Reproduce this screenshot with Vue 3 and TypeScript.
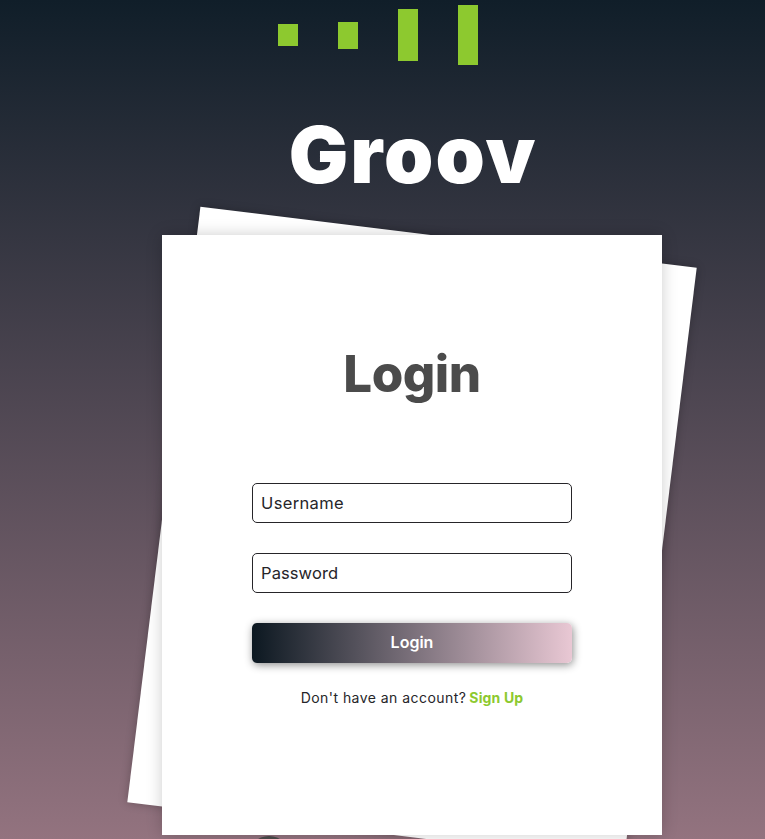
<script setup lang="ts">
import { ref } from 'vue'

interface Bar {
  id: number
  height: number
}

const bars: Bar[] = [
  { id: 1, height: 21.5 },
  { id: 2, height: 27 },
  { id: 3, height: 51.7 },
  { id: 4, height: 59.7 },
]

const username = ref('')
const password = ref('')
</script>

<template>
  <main class="page">
    <div class="equalizer">
      <span v-for="bar in bars" :key="bar.id" class="bar" :style="{ height: bar.height + 'px' }"></span>
    </div>
    <h1 class="brand">Groov</h1>
    <section class="stack">
      <div class="sheet"></div>
      <form class="card" @submit.prevent>
        <h2 class="title">Login</h2>
        <input v-model="username" class="field user" type="text" placeholder="Username" />
        <input v-model="password" class="field pass" type="password" placeholder="Password" />
        <button class="submit" type="submit">Login</button>
        <p class="hint"><span class="question">Don't have an account?</span><a class="link">Sign Up</a></p>
      </form>
      <div class="knob"></div>
    </section>
  </main>
</template>

<style>
body {
  margin: 0;
  overflow: hidden;
}
</style>

<style scoped>
.page {
  box-sizing: border-box;
  width: 100%;
  height: 839px;
  overflow: hidden;
  display: flex;
  flex-direction: column;
  background: linear-gradient(#101e29, #93737f);
  font-family: Inter, 'Open Sans', sans-serif;
}

.equalizer {
  flex: none;
  display: flex;
  align-items: center;
  gap: 40px;
  height: 70px;
  padding-left: 278px;
}

.bar {
  width: 20px;
  background: #8dc92f;
}

.brand {
  flex: none;
  display: flex;
  justify-content: center;
  width: 500px;
  height: 120px;
  margin: 25px 0 20px 163px;
  color: #fff;
  font-size: 79px;
  font-weight: 900;
  letter-spacing: 2px;
  line-height: 119px;
}

.stack {
  position: relative;
  flex: none;
  width: 500px;
  height: 600px;
  margin-left: 162px;
}

.sheet {
  position: absolute;
  inset: 0;
  background: #fff;
  box-shadow: 0 0 10px rgba(0, 0, 0, 0.25);
  transform: rotate(7deg);
}

.card {
  position: relative;
  z-index: 1;
  box-sizing: border-box;
  display: flex;
  flex-direction: column;
  align-items: center;
  width: 500px;
  height: 600px;
  padding-top: 100px;
  background: #fff;
  box-shadow: 0 0 15px rgba(0, 0, 0, 0.2);
}

.title {
  height: 78px;
  margin: 0 0 70px;
  color: #4b4b4b;
  font-size: 51px;
  font-weight: 850;
  letter-spacing: -0.5px;
  line-height: 78px;
  white-space: nowrap;
}

.field {
  box-sizing: border-box;
  width: 320px;
  height: 40px;
  margin: 0 0 30px;
  padding: 0 8px;
  border: 1px solid #262529;
  border-radius: 5px;
  outline: none;
  background: #fff;
  color: #262529;
  font-family: inherit;
  font-size: 16.5px;
}

.field::placeholder {
  color: #262529;
  opacity: 1;
}

.user {
  letter-spacing: 0.35px;
}

.pass {
  letter-spacing: 0.1px;
}

.submit {
  width: 320px;
  height: 40px;
  padding: 0 0 2px;
  border: 0;
  border-radius: 5px;
  background: linear-gradient(90deg, #0c1821, #e9c8d4);
  box-shadow: 1px 2px 8px rgba(0, 0, 0, 0.45);
  color: #fff;
  font-family: inherit;
  font-size: 16px;
  font-weight: 600;
}

.hint {
  display: flex;
  gap: 3px;
  margin: 24px 0 0;
  color: #262529;
  font-size: 14px;
  line-height: 22px;
  white-space: nowrap;
}

.question {
  letter-spacing: 0.45px;
}

.link {
  color: #8dc92f;
  font-weight: 700;
  letter-spacing: 0.15px;
}

.knob {
  position: absolute;
  top: 601px;
  left: 86px;
  width: 42px;
  height: 42px;
  border-radius: 50%;
  background: #4b4b4b;
}
</style>
